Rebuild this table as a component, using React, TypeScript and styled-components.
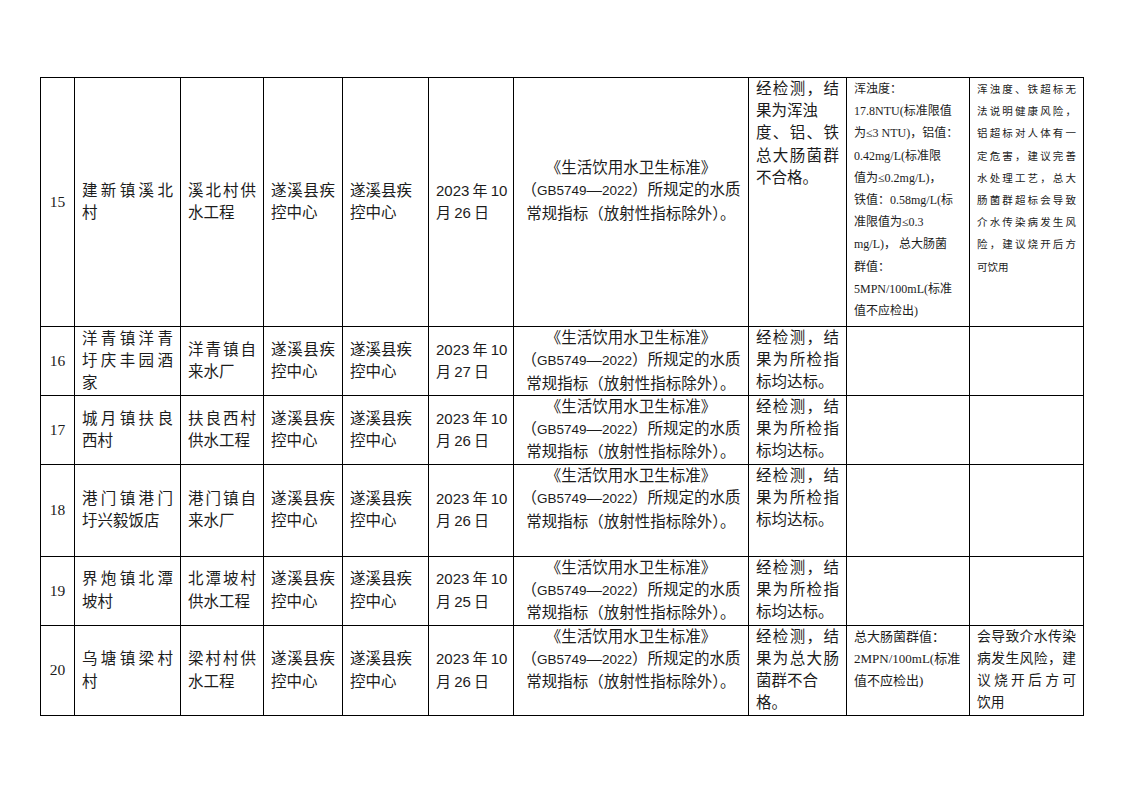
import React from 'react';
import styled, { createGlobalStyle } from 'styled-components';

const GlobalStyle = createGlobalStyle`
  html, body {
    margin: 0;
    padding: 0;
    background: #ffffff;
  }
  body {
    font-family: 'Liberation Sans', 'Noto Sans CJK SC', sans-serif;
    color: #1c1c1c;
  }
`;

const Page = styled.div`
  width: 1122px;
  min-height: 793px;
  box-sizing: border-box;
  padding: 77px 0 0 40px;
  background: #fff;
`;

const Table = styled.table`
  border-collapse: collapse;
  table-layout: fixed;
  width: 1043px;
`;

const Row = styled.tr<{ $h: number }>`
  height: ${(p) => p.$h}px;
`;

type Face = 'sans' | 'serif';

const Cell = styled.td<{
  $align?: 'left' | 'center';
  $valign?: 'top' | 'middle';
  $size?: number;
  $face?: Face;
}>`
  border: 1px solid #000;
  padding: 0 7px;
  text-align: ${(p) => p.$align ?? 'left'};
  vertical-align: ${(p) => p.$valign ?? 'middle'};
  font-size: ${(p) => p.$size ?? 15.5}px;
  line-height: 22.2px;
  font-family: ${(p) =>
    p.$face === 'serif'
      ? "'Liberation Serif', 'Noto Sans CJK SC', serif"
      : "'Liberation Sans', 'Noto Sans CJK SC', sans-serif"};
  overflow: hidden;
`;

const DateCell = styled(Cell)`
  font-size: 15px;
  word-spacing: -1px;
`;

const TextLine = styled.div<{ $spread: boolean }>`
  white-space: ${(p) => (p.$spread ? 'normal' : 'nowrap')};
  text-align: ${(p) => (p.$spread ? 'justify' : 'inherit')};
  text-align-last: ${(p) => (p.$spread ? 'justify' : 'auto')};
`;

const Latin = styled.span`
  font-family: 'Liberation Sans', sans-serif;
  font-size: 13.5px;
`;

type Line = string | { text: string; plain: true };
const plain = (text: string): Line => ({ text, plain: true });

const Lines: React.FC<{ lines: Line[]; spread?: boolean }> = ({ lines, spread }) => (
  <>
    {lines.map((l, i) => {
      const text = typeof l === 'string' ? l : l.text;
      const isSpread = !!spread && typeof l === 'string' && i < lines.length - 1;
      return (
        <TextLine key={i} $spread={isSpread}>
          {text || '\u00a0'}
        </TextLine>
      );
    })}
  </>
);

interface Note {
  size: number;
  lines: string[];
}

interface RowData {
  h: number;
  no: string;
  place: string[];
  plant: string[];
  date: string[];
  padStd?: boolean;
  result: Line[];
  detail?: Note;
  advice?: Note;
}

const COLS = [34, 106, 83, 79, 86, 85, 235, 98, 123, 114];
const CDC = ['遂溪县疾', '控中心'];
const PASS: Line[] = ['经检测，结', '果为所检指', '标均达标。'];

const rows: RowData[] = [
  {
    h: 249,
    no: '15',
    place: ['建新镇溪北', '村'],
    plant: ['溪北村供', '水工程'],
    date: ['2023 年 10', '月 26 日'],
    padStd: true,
    result: ['经检测，结', plain('果为浑浊'), '度、铝、铁', '总大肠菌群', '不合格。'],
    detail: {
      size: 12,
      lines: [
        '浑浊度：',
        '17.8NTU(标准限值',
        '为≤3 NTU)，铝值：',
        '0.42mg/L(标准限',
        '值为≤0.2mg/L)，',
        '铁值：0.58mg/L(标',
        '准限值为≤0.3',
        'mg/L)， 总大肠菌',
        '群值：',
        '5MPN/100mL(标准',
        '值不应检出)',
      ],
    },
    advice: {
      size: 10.5,
      lines: [
        '浑浊度、铁超标无',
        '法说明健康风险，',
        '铝超标对人体有一',
        '定危害，建议完善',
        '水处理工艺，总大',
        '肠菌群超标会导致',
        '介水传染病发生风',
        '险，建议烧开后方',
        '可饮用',
      ],
    },
  },
  {
    h: 69,
    no: '16',
    place: ['洋青镇洋青', '圩庆丰园酒', '家'],
    plant: ['洋青镇自', '来水厂'],
    date: ['2023 年 10', '月 27 日'],
    result: PASS,
  },
  {
    h: 68,
    no: '17',
    place: ['城月镇扶良', '西村'],
    plant: ['扶良西村', '供水工程'],
    date: ['2023 年 10', '月 26 日'],
    result: PASS,
  },
  {
    h: 92,
    no: '18',
    place: ['港门镇港门', '圩兴毅饭店'],
    plant: ['港门镇自', '来水厂'],
    date: ['2023 年 10', '月 26 日'],
    padStd: true,
    result: PASS,
  },
  {
    h: 69,
    no: '19',
    place: ['界炮镇北潭', '坡村'],
    plant: ['北潭坡村', '供水工程'],
    date: ['2023 年 10', '月 25 日'],
    result: PASS,
  },
  {
    h: 90,
    no: '20',
    place: ['乌塘镇梁村', '村'],
    plant: ['梁村村供', '水工程'],
    date: ['2023 年 10', '月 26 日'],
    padStd: true,
    result: ['经检测，结', '果为总大肠', plain('菌群不合'), '格。'],
    detail: {
      size: 13,
      lines: ['总大肠菌群值：', '2MPN/100mL(标准', '值不应检出)'],
    },
    advice: {
      size: 13.8,
      lines: ['会导致介水传染', '病发生风险，建', '议烧开后方可', '饮用'],
    },
  },
];

const Standard: React.FC<{ pad?: boolean }> = ({ pad }) => (
  <>
    <TextLine $spread={false}>《生活饮用水卫生标准》</TextLine>
    <TextLine $spread={false}>
      （<Latin>GB5749</Latin>—<Latin>2022</Latin>）所规定的水质
    </TextLine>
    <TextLine $spread={false}>常规指标（放射性指标除外）。</TextLine>
    {pad && <TextLine $spread={false}>{'\u00a0'}</TextLine>}
  </>
);

const App: React.FC = () => (
  <Page>
    <GlobalStyle />
    <Table>
      <colgroup>
        {COLS.map((w, i) => (
          <col key={i} style={{ width: w }} />
        ))}
      </colgroup>
      <tbody>
        {rows.map((r) => (
          <Row key={r.no} $h={r.h}>
            <Cell $align="center" $face="serif">
              {r.no}
            </Cell>
            <Cell>
              <Lines lines={r.place} spread />
            </Cell>
            <Cell>
              <Lines lines={r.plant} spread />
            </Cell>
            <Cell>
              <Lines lines={CDC} spread />
            </Cell>
            <Cell>
              <Lines lines={CDC} />
            </Cell>
            <DateCell>
              <Lines lines={r.date} />
            </DateCell>
            <Cell $align="center">
              <Standard pad={r.padStd} />
            </Cell>
            <Cell $valign="top">
              <Lines lines={r.result} spread />
            </Cell>
            <Cell $valign="top" $face="serif" $size={r.detail?.size}>
              {r.detail && <Lines lines={r.detail.lines} />}
            </Cell>
            <Cell $valign="top" $size={r.advice?.size}>
              {r.advice && <Lines lines={r.advice.lines} spread />}
            </Cell>
          </Row>
        ))}
      </tbody>
    </Table>
  </Page>
);

export default App;
